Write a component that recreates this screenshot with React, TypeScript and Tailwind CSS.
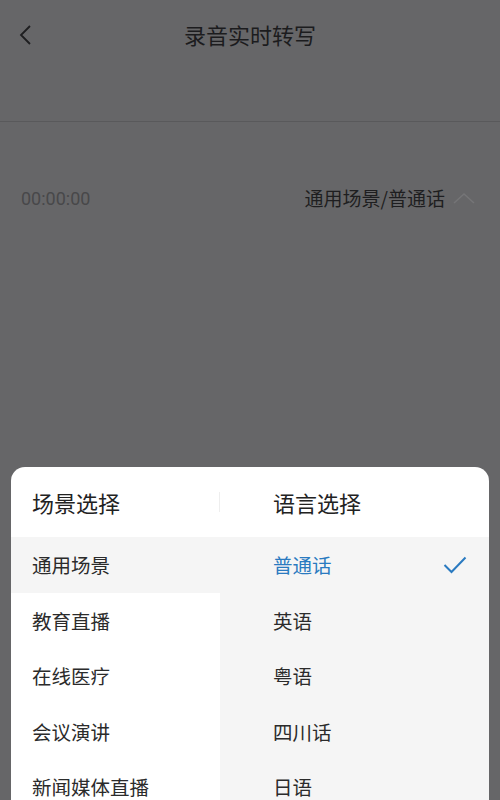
import React from "react";

const font = { fontFamily: '"Noto Sans CJK SC", "Noto Sans", sans-serif' };

export default function App() {
  const scenes = ["通用场景", "教育直播", "在线医疗", "会议演讲", "新闻媒体直播"];
  const langs = ["普通话", "英语", "粤语", "四川话", "日语"];
  return (
    <div className="w-[500px] h-[800px] bg-[#666668] flex flex-col overflow-hidden relative" style={font}>
      <div className="h-[72px] shrink-0 flex items-center relative pb-[4px]">
        <svg className="absolute left-[18px] top-[24px]" width="16" height="22" viewBox="0 0 16 22">
          <path d="M12 2 L3 11 L12 20" fill="none" stroke="#1e1e20" strokeWidth="1.8" />
        </svg>
        <div className="w-full text-center text-[22px] text-[#1c1c1e] leading-none">录音实时转写</div>
      </div>
      <div className="h-[50px] shrink-0 border-b border-[#59595b]" />
      <div className="h-[156px] shrink-0 flex items-center justify-between pl-[21px] pr-[25px] pb-[4px]">
        <span className="text-[18px] text-[#48484a]" style={{ fontFamily: "Roboto, sans-serif" }}>00:00:00</span>
        <div className="flex items-center gap-[8px]">
          <span className="text-[19px] text-[#1e1e20]">通用场景/普通话</span>
          <svg width="22" height="12" viewBox="0 0 22 12">
            <path d="M1 11 L11 2 L21 11" fill="none" stroke="#757577" strokeWidth="1.5" />
          </svg>
        </div>
      </div>
      <div className="h-[189px] shrink-0" />
      <div className="mx-[11px] shrink-0 bg-white rounded-t-[14px] overflow-hidden flex flex-col">
        <div className="h-[70px] flex items-center">
          <div className="w-[209px] pl-[21px] text-[22px] text-[#222] border-r border-[#eeeeee] h-[20px] flex items-center">场景选择</div>
          <div className="pl-[53px] text-[22px] text-[#222]">语言选择</div>
        </div>
        <div className="flex">
          <div className="w-[209px] flex flex-col">
            {scenes.map((s, i) => (
              <div key={s} className={`h-[55.5px] flex items-center pl-[21px] text-[19.5px] text-[#2b2b2b] ${i === 0 ? "bg-[#f5f5f5]" : "bg-white"}`}>{s}</div>
            ))}
          </div>
          <div className="flex-1 bg-[#f5f5f5] flex flex-col">
            {langs.map((l, i) => (
              <div key={l} className="h-[55.5px] flex items-center justify-between pl-[53px] pr-[22px]">
                <span className={`text-[19.5px] ${i === 0 ? "text-[#2a7ac0]" : "text-[#2b2b2b]"}`}>{l}</span>
                {i === 0 && (
                  <svg width="24" height="18" viewBox="0 0 24 18">
                    <path d="M1.5 9 L8.5 16 L22.5 1.5" fill="none" stroke="#2a7ac0" strokeWidth="2" />
                  </svg>
                )}
              </div>
            ))}
          </div>
        </div>
      </div>
    </div>
  );
}
